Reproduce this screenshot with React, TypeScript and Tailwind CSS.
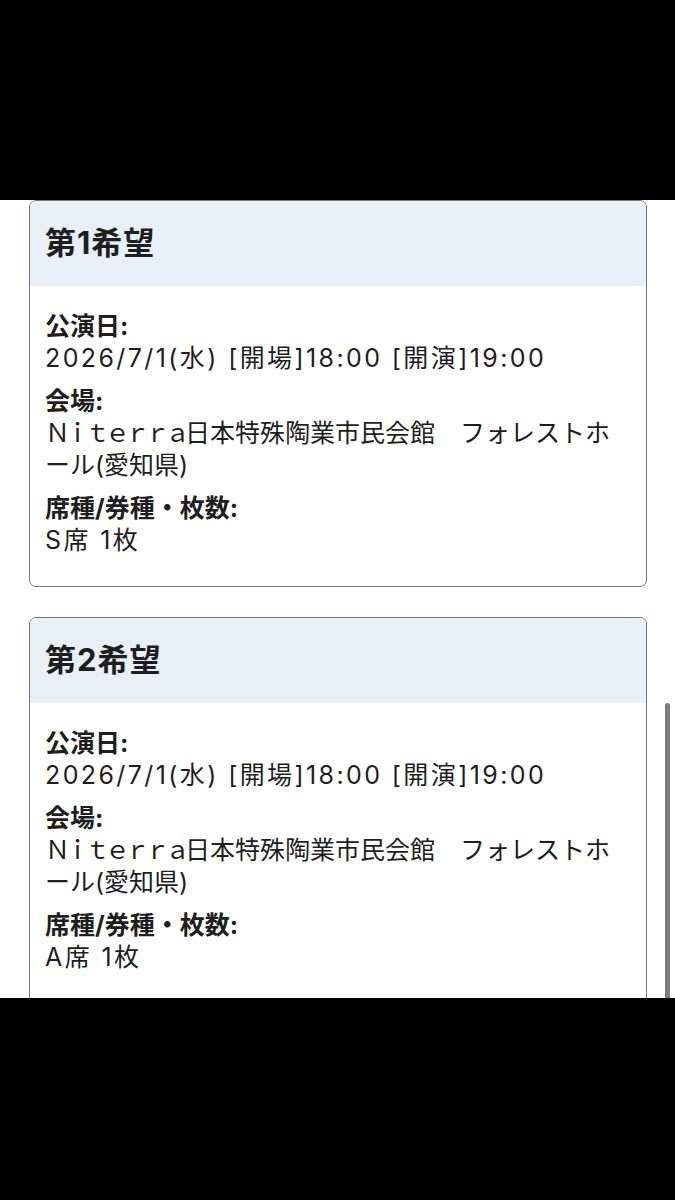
const font = { fontFamily: '"Inter", "Noto Sans CJK JP", sans-serif' };

type Line = { text: React.ReactNode; wide?: boolean };
type Item = { label: string; lines: Line[] };

function Venue() {
  return (
    <>
      <span className="tracking-[-5px]">Ｎｉｔｅｒｒａ</span>
      <span>日本特殊陶業市民会館　フォレストホ</span>
    </>
  );
}

function Card({ title, seat }: { title: string; seat: string }) {
  const items: Item[] = [
    { label: "公演日:", lines: [{ text: "2026/7/1(水) [開場]18:00 [開演]19:00", wide: true }] },
    { label: "会場:", lines: [{ text: <Venue /> }, { text: "ール(愛知県)" }] },
    { label: "席種/券種・枚数:", lines: [{ text: seat, wide: true }] },
  ];
  return (
    <div className="ml-[29px] w-[618px] shrink-0 overflow-hidden rounded-[7px] border-[1.5px] border-[#767676] bg-white">
      <div className="flex h-[85px] items-center bg-[#e7eff7] px-[15px] pb-[1px]">
        <span className="text-[31px] tracking-[1px] font-bold text-[#1e1e1e]">{title}</span>
      </div>
      <div className="flex flex-col gap-[12px] px-[15px] pt-[25px] pb-[30px] text-[#1e1e1e]">
        {items.map((it) => (
          <div key={it.label} className="flex flex-col">
            <div className="text-[25px] leading-[31px] font-bold">{it.label}</div>
            {it.lines.map((l, i) => (
              <div
                key={i}
                className={
                  l.wide
                    ? "whitespace-nowrap text-[25px] leading-[32px] tracking-[2.4px]"
                    : "whitespace-nowrap text-[25px] leading-[32px]"
                }
              >
                {l.text}
              </div>
            ))}
          </div>
        ))}
      </div>
    </div>
  );
}

export default function App() {
  return (
    <div className="flex h-[1200px] w-[675px] flex-col bg-black" style={font}>
      <div className="h-[200px] shrink-0" />
      <div className="relative flex h-[798px] shrink-0 flex-col gap-[30px] overflow-hidden bg-white">
        <Card title="第1希望" seat="S席 1枚" />
        <Card title="第2希望" seat="A席 1枚" />
        <div className="absolute right-[5px] top-[503px] h-[320px] w-[5px] rounded-full bg-[#7c7c7c]" />
      </div>
    </div>
  );
}
